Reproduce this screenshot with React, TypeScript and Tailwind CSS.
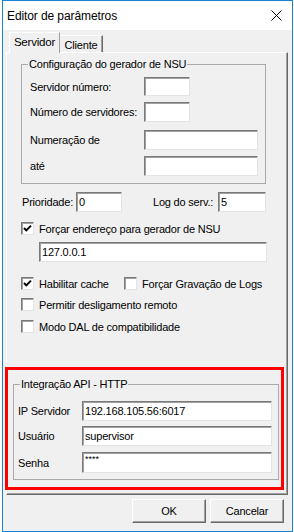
import React from 'react';

const sunken =
  'bg-white border border-t-[#7a7a7a] border-l-[#7a7a7a] border-r-[#e3e3e3] border-b-[#e3e3e3] shadow-[inset_1px_1px_0_#a0a0a0]';

function Field({ w, h = 20, value, className = '' }: { w: number; h?: number; value?: React.ReactNode; className?: string }) {
  return (
    <div className={`${sunken} ${className} shrink-0 flex items-center pl-[2px] overflow-hidden`} style={{ width: w, height: h }}>
      {value}
    </div>
  );
}

function Check({ checked }: { checked?: boolean }) {
  return (
    <div className={`${sunken} w-[13px] h-[13px] shrink-0 flex items-center justify-center`}>
      {checked && (
        <svg width="9" height="9" viewBox="0 0 9 9">
          <path d="M1 4 L3.3 6.4 L8 1.6" fill="none" stroke="#000" strokeWidth="2" />
        </svg>
      )}
    </div>
  );
}

function CheckRow({ label, checked, className = '' }: { label: string; checked?: boolean; className?: string }) {
  return (
    <div className={`flex items-center h-[13px] ${className}`}>
      <Check checked={checked} />
      <span className="ml-[5px] whitespace-nowrap">{label}</span>
    </div>
  );
}

function Button({ children }: { children: React.ReactNode }) {
  return (
    <div className="w-[74px] h-[24px] flex items-center justify-center bg-[#f0f0f0] border border-t-white border-l-white border-r-[#696969] border-b-[#696969] shadow-[inset_-1px_-1px_0_#a0a0a0]">
      {children}
    </div>
  );
}

export default function App() {
  return (
    <div className="w-[294px] h-[532px] bg-white text-black text-[11px] tracking-[-0.2px] font-['Liberation_Sans',Arial,sans-serif] leading-[14px]">
      <div className="ml-[2px] w-[291px] h-[532px] border border-[#1883d7] bg-[#f0f0f0] flex flex-col">
        {/* title bar */}
        <div className="h-[29px] shrink-0 bg-white flex items-center justify-between pl-[4px] pr-[10px]">
          <span className="text-[12px] tracking-[-0.1px]">Editor de parâmetros</span>
          <svg width="11" height="11" viewBox="0 0 11 11">
            <path d="M0.5 0.5 L10.5 10.5 M10.5 0.5 L0.5 10.5" stroke="#000" strokeWidth="1" />
          </svg>
        </div>

        <div className="px-[3px]">
          {/* tabs */}
          <div className="h-[22px] flex items-end pl-[3px]">
            <div className="relative top-[1px] z-10 h-[21px] w-[51px] bg-[#f0f0f0] border-t border-l border-r border-t-white border-l-white border-r-[#a0a0a0] flex items-center justify-center pb-[3px] text-[11.5px]">
              Servidor
            </div>
            <div className="h-[17px] w-[43px] border-t border-r border-t-white border-r-[#696969] shadow-[inset_-1px_0_0_#a0a0a0] flex items-center justify-center pt-[1px]">
              Cliente
            </div>
          </div>

          {/* tab page */}
          <div className="w-[282px] h-[443px] border border-t-white border-l-white border-r-[#696969] border-b-[#696969] shadow-[inset_-1px_-1px_0_#a0a0a0] pt-[4px]">
            <fieldset className="ml-[14px] w-[245px] border border-[#a9a9a9] pb-[7px]">
              <legend className="ml-[6px] px-[1px] leading-[14px]">Configuração do gerador de NSU</legend>
              <div className="mt-[6px] flex items-center h-[19px] pl-[8px]">
                <span className="w-[114px]">Servidor número:</span>
                <Field w={46} h={19} />
              </div>
              <div className="mt-[6px] flex items-center h-[20px] pl-[8px]">
                <span className="w-[114px]">Número de servidores:</span>
                <Field w={46} />
              </div>
              <div className="mt-[8px] flex items-center h-[20px] pl-[8px]">
                <span className="w-[114px]">Numeração de</span>
                <Field w={114} />
              </div>
              <div className="mt-[6px] flex items-center h-[20px] pl-[8px]">
                <span className="w-[114px]">até</span>
                <Field w={114} />
              </div>
            </fieldset>

            <div className="mt-[8px] flex items-center h-[20px] pl-[15px]">
              <span className="w-[54px]">Prioridade:</span>
              <Field w={46} value="0" />
              <span className="ml-[31px] w-[65px]">Log do serv.:</span>
              <Field w={48} value="5" />
            </div>

            <CheckRow className="mt-[10px] pl-[14px]" checked label="Forçar endereço para gerador de NSU" />
            <Field className="mt-[7px] ml-[32px]" w={228} value="127.0.0.1" />

            <div className="mt-[15px] flex items-center pl-[14px]">
              <CheckRow className="w-[103px]" checked label="Habilitar cache" />
              <CheckRow label="Forçar Gravação de Logs" />
            </div>
            <CheckRow className="mt-[8px] pl-[14px]" label="Permitir desligamento remoto" />
            <CheckRow className="mt-[9px] pl-[14px]" label="Modo DAL de compatibilidade" />

            {/* highlighted group */}
            <div className="mt-[34px] -ml-[2px] w-[279px] border-[3px] border-[#ff0000] pt-[7px] pb-[7px] relative z-10">
              <fieldset className="ml-[5px] w-[266px] border border-[#a9a9a9] pb-[6px]">
                <legend className="ml-[6px] px-[1px] leading-[14px]">Integração API - HTTP</legend>
                <div className="mt-[10px] flex items-center h-[20px] pl-[4px]">
                  <span className="w-[64px]">IP Servidor</span>
                  <Field w={190} value="192.168.105.56:6017" />
                </div>
                <div className="mt-[5px] flex items-center h-[20px] pl-[4px]">
                  <span className="w-[64px]">Usuário</span>
                  <Field w={190} value="supervisor" />
                </div>
                <div className="mt-[6px] flex items-center h-[21px] pl-[4px]">
                  <span className="w-[64px]">Senha</span>
                  <Field
                    w={190}
                    h={21}
                    value={<span className="self-start mt-[2px] text-[9px] leading-[9px] tracking-[0px]">****</span>}
                  />
                </div>
              </fieldset>
            </div>
          </div>

          {/* buttons */}
          <div className="mt-[4px] flex justify-end gap-[4px] pr-[5px]">
            <Button>OK</Button>
            <Button>Cancelar</Button>
          </div>
        </div>
      </div>
    </div>
  );
}
